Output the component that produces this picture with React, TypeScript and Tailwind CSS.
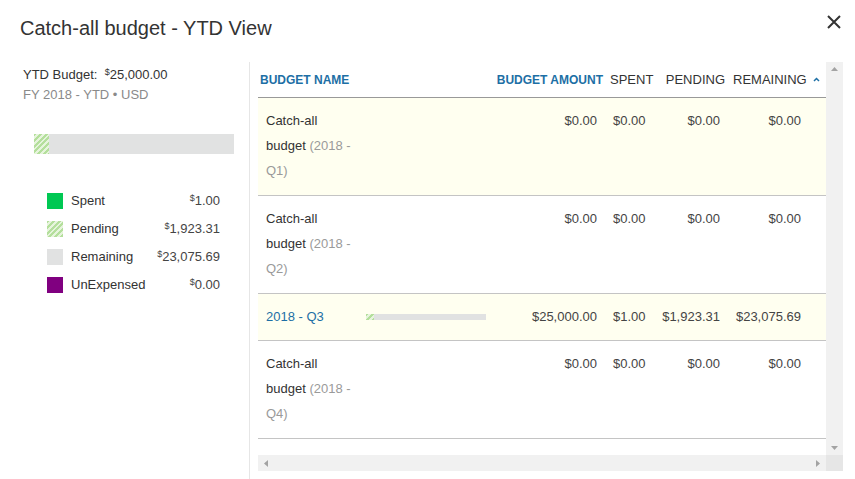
import React from 'react';

const hatch =
  'bg-[image:repeating-linear-gradient(135deg,#b4df9c_0px,#b4df9c_2px,#e6f4dc_2px,#e6f4dc_4px)]';

type Row = {
  name?: string;
  period?: string;
  link?: string;
  amount: string;
  spent: string;
  pending: string;
  remaining: string;
  highlight: boolean;
  bar?: boolean;
};

const rows: Row[] = [
  { name: 'Catch-all budget', period: '(2018 - Q1)', amount: '$0.00', spent: '$0.00', pending: '$0.00', remaining: '$0.00', highlight: true },
  { name: 'Catch-all budget', period: '(2018 - Q2)', amount: '$0.00', spent: '$0.00', pending: '$0.00', remaining: '$0.00', highlight: false },
  { link: '2018 - Q3', amount: '$25,000.00', spent: '$1.00', pending: '$1,923.31', remaining: '$23,075.69', highlight: true, bar: true },
  { name: 'Catch-all budget', period: '(2018 - Q4)', amount: '$0.00', spent: '$0.00', pending: '$0.00', remaining: '$0.00', highlight: false },
];

const legend = [
  { label: 'Spent', value: '1.00', swatch: 'bg-[#00c853]' },
  { label: 'Pending', value: '1,923.31', swatch: hatch },
  { label: 'Remaining', value: '23,075.69', swatch: 'bg-[#e1e2e2]' },
  { label: 'UnExpensed', value: '0.00', swatch: 'bg-[#800080]' },
];

const cols = 'grid grid-cols-[100px_142px_105px_54px_69px_98px]';

function Money({ value }: { value: string }) {
  return (
    <span>
      <sup className="text-[9px]">$</sup>
      {value}
    </span>
  );
}

export default function App() {
  return (
    <div className="w-[855px] h-[479px] bg-white text-[#333] font-['Liberation_Sans',Arial,sans-serif] flex flex-col overflow-hidden">
      {/* Title bar */}
      <div className="h-[62px] flex justify-between pl-5 pr-[14px]">
        <h1 className="text-[20px] leading-7 mt-[14px] text-[#333]">Catch-all budget - YTD View</h1>
        <svg className="mt-[15px]" width="14" height="14" viewBox="0 0 14 14">
          <path d="M1 1L13 13M13 1L1 13" stroke="#333" strokeWidth="2" />
        </svg>
      </div>

      <div className="flex flex-1 min-h-0">
        {/* Summary panel */}
        <div className="w-[250px] shrink-0 border-r border-[#e6e6e6] pl-[23px] pt-[3px] text-[13px] leading-5">
          <div>
            YTD Budget:&nbsp; <Money value="25,000.00" />
          </div>
          <div className="text-[#8a8a8a]">FY 2018 - YTD • USD</div>

          <div className="ml-[11px] mt-[29px] w-[200px] h-[20px] flex bg-[#e1e2e2]">
            <div className={`w-[15px] h-full ${hatch}`}></div>
          </div>

          <div className="ml-[24px] mt-[33px] w-[173px]">
            {legend.map((item) => (
              <div key={item.label} className="h-[28px] flex items-center">
                <div className={`w-4 h-4 ${item.swatch}`}></div>
                <span className="ml-2 flex-1">{item.label}</span>
                <span className="text-[#444]">
                  <Money value={item.value} />
                </span>
              </div>
            ))}
          </div>
        </div>

        {/* Table panel */}
        <div className="pl-2 flex flex-col">
          <div className="flex h-[393px]">
            <div className="w-[568px]">
              <div className={`${cols} h-[36px] items-center border-b border-[#999]`}>
                <div className="pl-[2px] text-[12px] font-bold text-[#1d6fa5] whitespace-nowrap">BUDGET NAME</div>
                <div className="col-span-2 text-right pr-[2px] text-[12px] font-bold text-[#1d6fa5] whitespace-nowrap">BUDGET AMOUNT</div>
                <div className="pl-[5px] text-[13px] text-[#333]">SPENT</div>
                <div className="text-right pr-[3px] text-[13px] text-[#333] whitespace-nowrap">PENDING</div>
                <div className="pl-[5px] flex items-center gap-[6px] text-[13px] text-[#333]">
                  REMAINING
                  <svg width="7" height="5" viewBox="0 0 7 5">
                    <path d="M1 4L3.5 1.5L6 4" stroke="#1d6fa5" strokeWidth="1.5" fill="none" />
                  </svg>
                </div>
              </div>

              {rows.map((r, i) => (
                <div
                  key={i}
                  className={`${cols} border-b border-[#c4c4c4] pt-[10px] text-[13px] leading-[25px] ${r.bar ? 'pb-[11px]' : 'pb-[12px]'} ${r.highlight ? 'bg-[#fffff0]' : 'bg-white'}`}
                >
                  <div className="pl-2 pr-1">
                    {r.link ? (
                      <span className="text-[#1d6fa5] whitespace-nowrap">{r.link}</span>
                    ) : (
                      <span>
                        {r.name} <span className="text-[#9a9a9a]">{r.period}</span>
                      </span>
                    )}
                  </div>
                  <div className="pl-2 flex items-center">
                    {r.bar && (
                      <div className="w-[120px] h-[6px] flex bg-[#e1e2e2]">
                        <div className={`w-[8px] h-full ${hatch}`}></div>
                      </div>
                    )}
                  </div>
                  <div className="text-right pr-2 text-[#444]">{r.amount}</div>
                  <div className="pl-2 text-[#444]">{r.spent}</div>
                  <div className="text-right pr-2 text-[#444]">{r.pending}</div>
                  <div className="text-right pr-[25px] text-[#444]">{r.remaining}</div>
                </div>
              ))}
            </div>

            {/* Vertical scrollbar */}
            <div className="w-[17px] bg-[#f1f1f1] flex flex-col justify-between items-center py-[5px]">
              <svg width="7" height="4" viewBox="0 0 7 4">
                <path d="M0 4L3.5 0L7 4Z" fill="#a3a3a3" />
              </svg>
              <svg width="7" height="4" viewBox="0 0 7 4">
                <path d="M0 0L3.5 4L7 0Z" fill="#a3a3a3" />
              </svg>
            </div>
          </div>

          {/* Horizontal scrollbar */}
          <div className="flex h-[16px]">
            <div className="w-[568px] bg-[#f1f1f1] flex items-center justify-between px-[6px]">
              <svg width="4" height="7" viewBox="0 0 4 7">
                <path d="M4 0L0 3.5L4 7Z" fill="#a3a3a3" />
              </svg>
              <svg width="4" height="7" viewBox="0 0 4 7">
                <path d="M0 0L4 3.5L0 7Z" fill="#a3a3a3" />
              </svg>
            </div>
            <div className="w-[17px] bg-[#e6e6e6]"></div>
          </div>
        </div>
      </div>
    </div>
  );
}
